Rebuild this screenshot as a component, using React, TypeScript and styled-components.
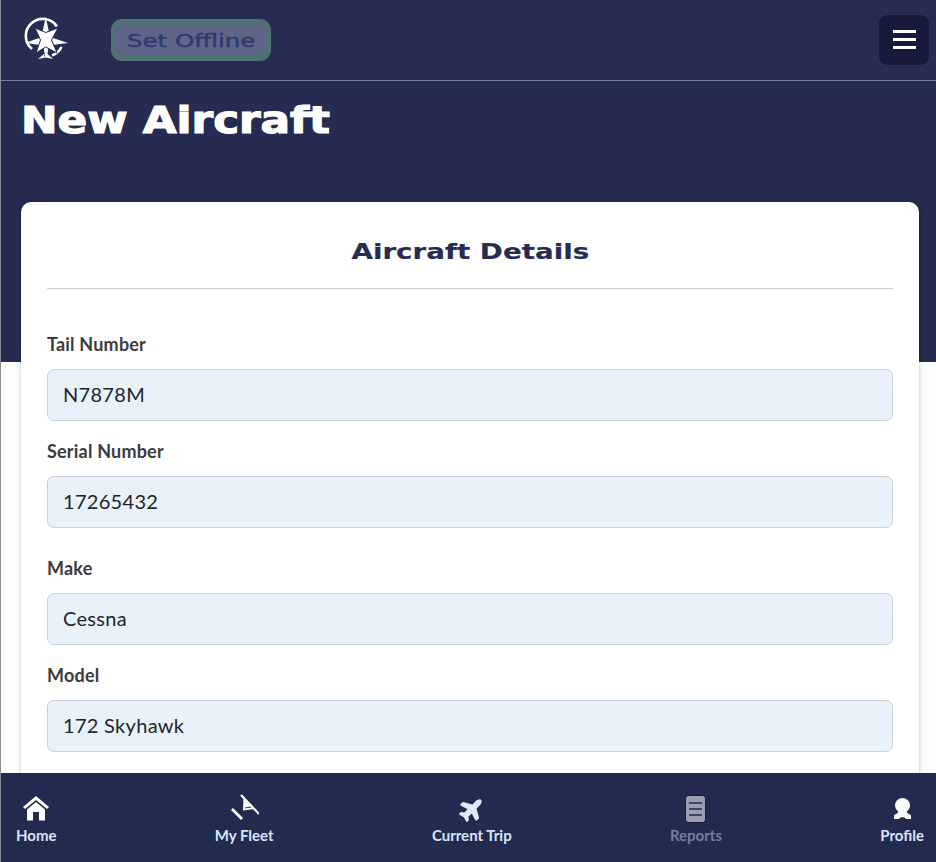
import React from "react";
import styled, { createGlobalStyle } from "styled-components";
import { FaPlane } from "react-icons/fa";

const Global = createGlobalStyle`
  html, body { margin: 0; padding: 0; background: #fdfdfb; }
  * { box-sizing: border-box; }
`;

const Page = styled.div`
  width: 936px;
  height: 862px;
  display: flex;
  flex-direction: column;
  overflow: hidden;
  border-left: 1px solid #8a8a92;
  font-family: "Lato", "Liberation Sans", sans-serif;
`;

const Header = styled.header`
  flex: none;
  height: 81px;
  display: flex;
  align-items: center;
  padding: 0 7px 1px 22px;
  background: #262c52;
  border-bottom: 1px solid #7482a8;
`;

const Logo = styled.svg`
  width: 48px;
  height: 48px;
  flex: none;
`;

const OfflineButton = styled.button`
  width: 160px;
  height: 42px;
  margin-left: 40px;
  padding: 1px 0 0;
  border: 5px solid #4f7374;
  border-radius: 11px;
  background: #5f6587;
  color: #2b3a6e;
  font-family: "DejaVu Sans", sans-serif;
  font-size: 18px;
  -webkit-text-stroke: 0.4px #2b3a6e;
  display: flex;
  align-items: center;
  justify-content: center;
`;

const WideText = styled.span<{ $x: number }>`
  display: inline-block;
  transform: scaleX(${(p) => p.$x});
  white-space: nowrap;
`;

const MenuButton = styled.button`
  margin-left: auto;
  width: 50px;
  height: 50px;
  border: 0;
  border-radius: 9px;
  background: #171a3a;
  display: flex;
  flex-direction: column;
  align-items: center;
  justify-content: center;
  gap: 5px;
  padding: 0;
`;

const MenuBar = styled.span`
  width: 23px;
  height: 3px;
  background: #fff;
`;

const Main = styled.main`
  flex: 1;
  min-height: 0;
  overflow: hidden;
`;

const Hero = styled.section`
  height: 281px;
  background: #252b51;
  padding: 17px 20px 0;
`;

const PageTitle = styled.h1`
  margin: 0;
  height: 44px;
  line-height: 44px;
  color: #fff;
  font-family: "DejaVu Sans", sans-serif;
  font-weight: 700;
  font-size: 38px;
  -webkit-text-stroke: 1.2px #fff;
  ${WideText} { transform-origin: left center; }
`;

const Card = styled.section`
  width: 898px;
  margin: -160px 0 0 20px;
  padding: 28px 26px 120px;
  background: #fff;
  border-radius: 10px;
  box-shadow: 0 0 4px rgba(0, 0, 0, 0.22);
`;

const CardTitle = styled.h2`
  margin: 0;
  height: 59px;
  border-bottom: 1px solid #cfcfd2;
  text-align: center;
  color: #262c52;
  font-family: "DejaVu Sans", sans-serif;
  font-weight: 700;
  font-size: 22px;
  -webkit-text-stroke: 0.2px #262c52;
  line-height: 44px;
`;

const FieldGroup = styled.div<{ $top: number }>`
  padding-top: ${(p) => p.$top}px;
  display: flex;
  flex-direction: column;
  gap: 24px;
`;

const Field = styled.label`
  display: flex;
  flex-direction: column;
  gap: 19px;
`;

const LabelText = styled.span`
  height: 12px;
  line-height: 12px;
  font-size: 18px;
  font-weight: 700;
  letter-spacing: 0.2px;
  color: #3c3a3e;
`;

const Input = styled.input`
  width: 100%;
  height: 52px;
  padding: 0 15px 2px;
  border: 1px solid #ccd1d8;
  border-radius: 7px;
  background: #e9f1fa;
  color: #212529;
  font-family: "Lato", sans-serif;
  font-size: 20px;
  letter-spacing: 0.3px;
  outline: none;
`;

const BottomNav = styled.nav`
  flex: none;
  height: 89px;
  display: flex;
  justify-content: space-between;
  padding: 20px 12px 0 15px;
  background: #232a4f;
`;

const NavItem = styled.a<{ $muted?: boolean }>`
  display: flex;
  flex-direction: column;
  align-items: center;
  height: 56px;
  color: ${(p) => (p.$muted ? "#757d9c" : "#d6e6f7")};
  font-size: 15px;
  line-height: 18px;
  font-weight: 700;
  font-family: "Lato", sans-serif;
`;

const NavIcon = styled.span`
  height: 33px;
  padding-bottom: 2px;
  display: flex;
  align-items: center;
  justify-content: center;
  color: #fff;
`;

const PlaneIcon = styled(FaPlane)`
  width: 26px;
  height: 26px;
  color: #dcebf8;
  transform: rotate(-45deg);
`;

const LogoMark = () => (
  <Logo viewBox="0 0 48 48">
    <path d="M34 10.5 A17 17 0 1 0 9 33" fill="none" stroke="#fff" strokeWidth="2.6" />
    <path d="M38.5 31 A17 17 0 0 1 29 39.5" fill="none" stroke="#fff" strokeWidth="2.6" />
    <path d="M22.7 0.7 L26 16 L22.7 22 L19.5 16 Z" fill="#fff" />
    <path d="M45 27 L30 22 L25 24 L29 29 Z" fill="#fff" />
    <path d="M2 27 L16 22 L21 24 L17 29 Z" fill="#fff" />
    <path d="M22.7 44 L20 28 L22.7 24 L25.5 28 L24.5 38 L30 43 L22.7 41.5 L15 43 L21 38 Z" fill="#fff" />
    <path d="M12 12 L22.7 16.5 L35 12 L28.5 24 L34 37 L22.7 31 L13 37 L17.5 24 Z" fill="#fff" stroke="#262c52" strokeWidth="1" />
  </Logo>
);

const HomeIcon = () => (
  <svg width="26" height="25" viewBox="0 0 26 25">
    <path d="M13 0 L26 11 L24 13 L13 4 L2 13 L0 11 Z" fill="#fff" />
    <path d="M4 13.5 L13 6 L22 13.5 V24.5 H16 V16 H10 V24.5 H4 Z" fill="#fff" />
  </svg>
);

const FleetIcon = () => (
  <svg width="30" height="30" viewBox="0 0 30 30">
    <path d="M3 15 L13 25" stroke="#fff" strokeWidth="2.8" fill="none" />
    <path d="M12 1 L30 20" stroke="#fff" strokeWidth="2.2" fill="none" />
    <path d="M14.5 4 L25 15 L14 16.5 Z" fill="#fff" />
    <path d="M16 14 L22 13" stroke="#232a4f" strokeWidth="1" />
  </svg>
);

const ReportsIcon = () => (
  <svg width="21" height="28" viewBox="0 0 21 28">
    <rect x="0.5" y="0.5" width="20" height="27" rx="3" fill="#9a9eb0" stroke="#14183a" />
    <path d="M4 8 H17 M4 14 H17 M4 20 H17" stroke="#232a4f" strokeWidth="1.6" />
  </svg>
);

const ProfileIcon = () => (
  <svg width="19" height="21" viewBox="0 0 19 21">
    <circle cx="9.5" cy="7.5" r="7.5" fill="#fff" />
    <path d="M5.5 13 C5.5 16 1.5 16 1 17.5 V21 H6 C7 18.5 12 18.5 13 21 H18 V17.5 C17.5 16 13.5 16 13.5 13 Z" fill="#fff" />
  </svg>
);

const fields1 = [
  { label: "Tail Number", value: "N7878M" },
  { label: "Serial Number", value: "17265432" },
];
const fields2 = [
  { label: "Make", value: "Cessna" },
  { label: "Model", value: "172 Skyhawk" },
];

const FieldRow = ({ label, value }: { label: string; value: string }) => (
  <Field>
    <LabelText>{label}</LabelText>
    <Input defaultValue={value} />
  </Field>
);

export default function App() {
  return (
    <Page>
      <Global />
      <Header>
        <LogoMark />
        <OfflineButton>
          <WideText $x={1.36}>Set Offline</WideText>
        </OfflineButton>
        <MenuButton aria-label="menu">
          <MenuBar />
          <MenuBar />
          <MenuBar />
        </MenuButton>
      </Header>
      <Main>
        <Hero>
          <PageTitle>
            <WideText $x={1.15}>New Aircraft</WideText>
          </PageTitle>
        </Hero>
        <Card>
          <CardTitle>
            <WideText $x={1.26}>Aircraft Details</WideText>
          </CardTitle>
          <FieldGroup $top={49}>
            {fields1.map((f) => (
              <FieldRow key={f.label} {...f} />
            ))}
          </FieldGroup>
          <FieldGroup $top={34}>
            {fields2.map((f) => (
              <FieldRow key={f.label} {...f} />
            ))}
          </FieldGroup>
        </Card>
      </Main>
      <BottomNav>
        <NavItem>
          <NavIcon>
            <HomeIcon />
          </NavIcon>
          Home
        </NavItem>
        <NavItem>
          <NavIcon>
            <FleetIcon />
          </NavIcon>
          My Fleet
        </NavItem>
        <NavItem>
          <NavIcon>
            <PlaneIcon />
          </NavIcon>
          Current Trip
        </NavItem>
        <NavItem $muted>
          <NavIcon>
            <ReportsIcon />
          </NavIcon>
          Reports
        </NavItem>
        <NavItem>
          <NavIcon>
            <ProfileIcon />
          </NavIcon>
          Profile
        </NavItem>
      </BottomNav>
    </Page>
  );
}
